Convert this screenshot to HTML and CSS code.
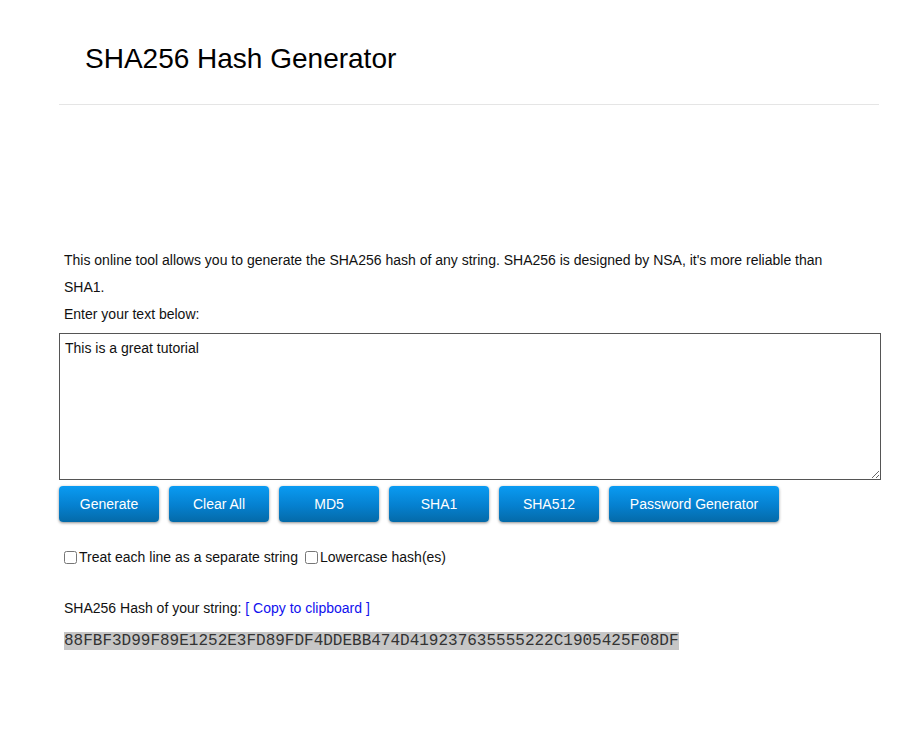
FILE: index.html
```html
<!DOCTYPE html>
<html>
<head>
<meta charset="utf-8">
<link rel="stylesheet" href="styles.css">
</head>
<body>
<div class="page">
  <header class="head">
    <h1 class="title">SHA256 Hash Generator</h1>
  </header>
  <div class="adspace"></div>
  <main class="content">
    <p class="intro">This online tool allows you to generate the SHA256 hash of any string. SHA256 is designed by NSA, it's more reliable than SHA1.</p>
    <p class="label">Enter your text below:</p>
    <textarea class="input">This is a great tutorial</textarea>
    <div class="buttons">
      <button class="btn">Generate</button>
      <button class="btn">Clear All</button>
      <button class="btn">MD5</button>
      <button class="btn">SHA1</button>
      <button class="btn">SHA512</button>
      <button class="btn wide">Password Generator</button>
    </div>
    <div class="options">
      <label class="opt"><input type="checkbox" class="cb">Treat each line as a separate string</label>
      <label class="opt"><input type="checkbox" class="cb">Lowercase hash(es)</label>
    </div>
    <p class="result-label">SHA256 Hash of your string: <a class="copy" href="#">[ Copy to clipboard ]</a></p>
    <div class="hash"><span class="hash-text">88FBF3D99F89E1252E3FD89FDF4DDEBB474D419237635555222C1905425F08DF</span></div>
  </main>
</div>
</body>
</html>
```
FILE: styles.css
```css
html, body {
  margin: 0;
  padding: 0;
  background: #fff;
}
body {
  font-family: "Liberation Sans", Arial, sans-serif;
  font-size: 14px;
  color: #111;
}
.page {
  width: 822px;
  margin-left: 59px;
}
.head {
  width: 820px;
  border-bottom: 1px solid #e5e5e5;
  height: 105px;
  box-sizing: border-box;
}
.title {
  margin: 0;
  padding: 43px 0 0 26px;
  font-size: 28px;
  font-weight: normal;
  line-height: 32px;
  color: #000;
}
.adspace {
  height: 142px;
}
.content {
  padding: 0;
}
.intro {
  margin: 0;
  padding-left: 5px;
  padding-right: 50px;
  line-height: 27px;
}
.label {
  margin: 0;
  padding-left: 5px;
  line-height: 27px;
}
.input {
  display: block;
  margin-top: 5px;
  width: 822px;
  height: 147px;
  box-sizing: border-box;
  border: 1px solid #555;
  border-radius: 0;
  padding: 6px 5px;
  font-family: "Liberation Sans", Arial, sans-serif;
  font-size: 14px;
  color: #111;
  resize: both;
}
.buttons {
  display: flex;
  gap: 10px;
  margin-top: 6px;
}
.btn {
  width: 100px;
  height: 36px;
  border: none;
  border-radius: 4px;
  background: linear-gradient(to bottom, #0a9bf2 0%, #0580cf 55%, #046aa8 100%);
  box-shadow: 0 1px 3px rgba(0,0,0,0.45);
  color: #fff;
  font-family: "Liberation Sans", Arial, sans-serif;
  font-size: 14px;
  padding: 0;
  cursor: pointer;
}
.btn.wide {
  width: 170px;
}
.options {
  display: flex;
  align-items: center;
  margin-top: 26px;
  padding-left: 4px;
  line-height: 18px;
}
.opt {
  display: inline-flex;
  align-items: center;
  margin-right: 6px;
}
.cb {
  width: 13px;
  height: 13px;
  margin: 0 2px 0 1px;
}
.result-label {
  margin: 33px 0 0 0;
  padding-left: 5px;
  line-height: 18px;
}
.copy {
  color: #1010ee;
  text-decoration: none;
}
.hash {
  margin-top: 15px;
  padding-left: 5px;
}
.hash-text {
  font-family: "Courier New", "Liberation Mono", monospace;
  font-size: 16px;
  line-height: 18px;
  background: #c6c6c6;
  color: #333;
}
```
